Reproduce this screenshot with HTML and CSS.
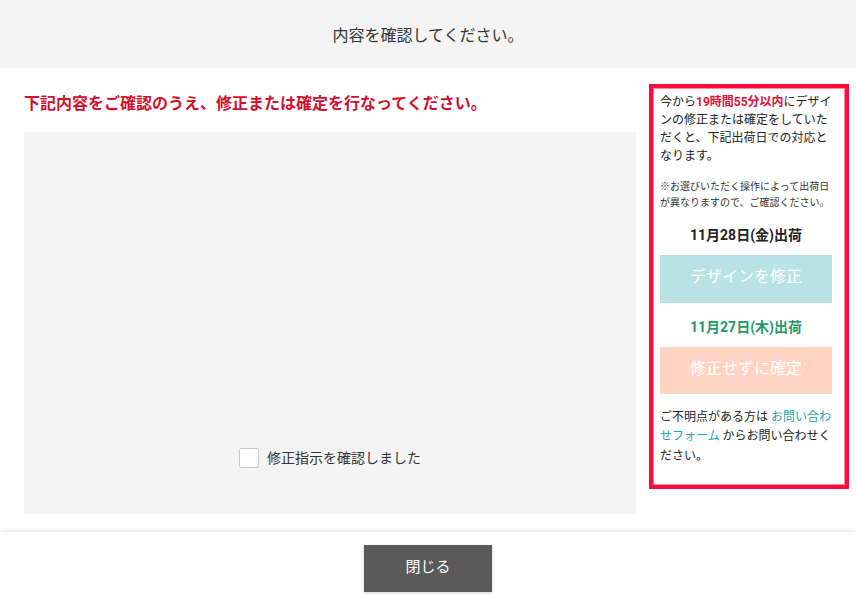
FILE: index.html
```html
<!DOCTYPE html>
<html lang="ja">
<head>
<meta charset="utf-8">
<title>内容を確認してください。</title>
<link rel="stylesheet" href="styles.css">
</head>
<body>
<header class="page-header">内容を確認してください。</header>
<main class="content">
  <section class="preview">
    <h1 class="notice">下記内容をご確認のうえ、修正または確定を行なってください。</h1>
    <div class="preview-box">
      <label class="confirm">
        <span class="checkbox"></span>
        <span class="confirm-label">修正指示を確認しました</span>
      </label>
    </div>
  </section>
  <aside class="panel">
    <p class="lead">今から<strong class="accent">19時間55分以内</strong>にデザインの修正または確定をしていただくと、下記出荷日での対応となります。</p>
    <p class="note">※お選びいただく操作によって出荷日が異なりますので、ご確認ください。</p>
    <p class="ship-date">11月28日(金)出荷</p>
    <button class="action action-edit" type="button">デザインを修正</button>
    <p class="ship-date ship-date-green">11月27日(木)出荷</p>
    <button class="action action-confirm" type="button">修正せずに確定</button>
    <p class="contact">ご不明点がある方は <a class="link" href="#">お問い合わせフォーム</a> からお問い合わせください。</p>
  </aside>
</main>
<footer class="page-footer">
  <button class="close" type="button">閉じる</button>
</footer>
</body>
</html>
```

FILE: styles.css
```css
* { box-sizing: border-box; }
html, body { margin: 0; padding: 0; }
body {
  font-family: "Roboto", "Noto Sans CJK JP", sans-serif;
  color: #333;
  background: #fff;
  width: 856px;
  height: 599px;
  overflow: hidden;
}
.page-header {
  height: 68px;
  background: #f4f4f4;
  display: flex;
  align-items: center;
  justify-content: center;
  font-size: 16px;
  color: #333;
}
.content {
  display: grid;
  grid-template-columns: 612px 200px;
  column-gap: 13px;
  padding: 16px 7px 0 24px;
  height: 464px;
}
.notice {
  margin: 8px 0 16px;
  font-size: 16px;
  line-height: 24px;
  font-weight: 700;
  color: #d0102e;
}
.preview-box {
  height: 382px;
  background: #f4f4f4;
  display: flex;
  align-items: flex-end;
  justify-content: center;
  padding-bottom: 46px;
}
.confirm {
  display: flex;
  align-items: center;
  cursor: pointer;
}
.checkbox {
  width: 20px;
  height: 20px;
  background: #fff;
  border: 1px solid #c8c8c8;
  border-radius: 2px;
}
.confirm-label {
  margin-left: 8px;
  font-size: 14px;
  line-height: 20px;
  color: #333;
}
.panel {
  align-self: start;
  border: 4px solid #ff0a3c;
  box-shadow: inset 0 0 0 1px #ff8aa2;
  padding: 5px 13px 19px 7px;
  display: flex;
  flex-direction: column;
  height: 405px;
}
.panel p { margin: 0; }
.lead {
  font-size: 12px;
  line-height: 18px;
  color: #222;
}
.accent {
  color: #e0103a;
  font-weight: 700;
}
.note {
  margin-top: 14px !important;
  font-size: 10px;
  line-height: 16px;
  color: #333;
}
.ship-date {
  margin-top: 14px !important;
  text-align: center;
  font-size: 14px;
  line-height: 20px;
  font-weight: 700;
  color: #222;
}
.ship-date-green { color: #23996a; }
.action {
  margin-top: 10px;
  height: 48px;
  width: 172px;
  border: 0;
  font-family: inherit;
  font-size: 16px;
  line-height: 20px;
  padding: 0 0 3px;
  color: #fff;
  cursor: pointer;
}
.action-edit { background: #b9e2e4; }
.action-confirm { background: #ffd4c2; height: 47px; }
.contact {
  margin-top: 14px !important;
  font-size: 12px;
  line-height: 19.5px;
  color: #222;
}
.link {
  color: #23a3b1;
  text-decoration: none;
}
.page-footer {
  height: 67px;
  background: #fff;
  box-shadow: 0 -1px 4px rgba(0, 0, 0, 0.12);
  display: flex;
  justify-content: center;
  align-items: flex-start;
  padding-top: 13px;
  position: relative;
}
.close {
  width: 128px;
  height: 47px;
  background: #5a5a5a;
  color: #fff;
  border: 0;
  font-family: inherit;
  font-size: 15px;
  line-height: 20px;
  padding: 0 0 3px;
  box-shadow: 0 1px 3px rgba(0, 0, 0, 0.2);
  cursor: pointer;
}
```
